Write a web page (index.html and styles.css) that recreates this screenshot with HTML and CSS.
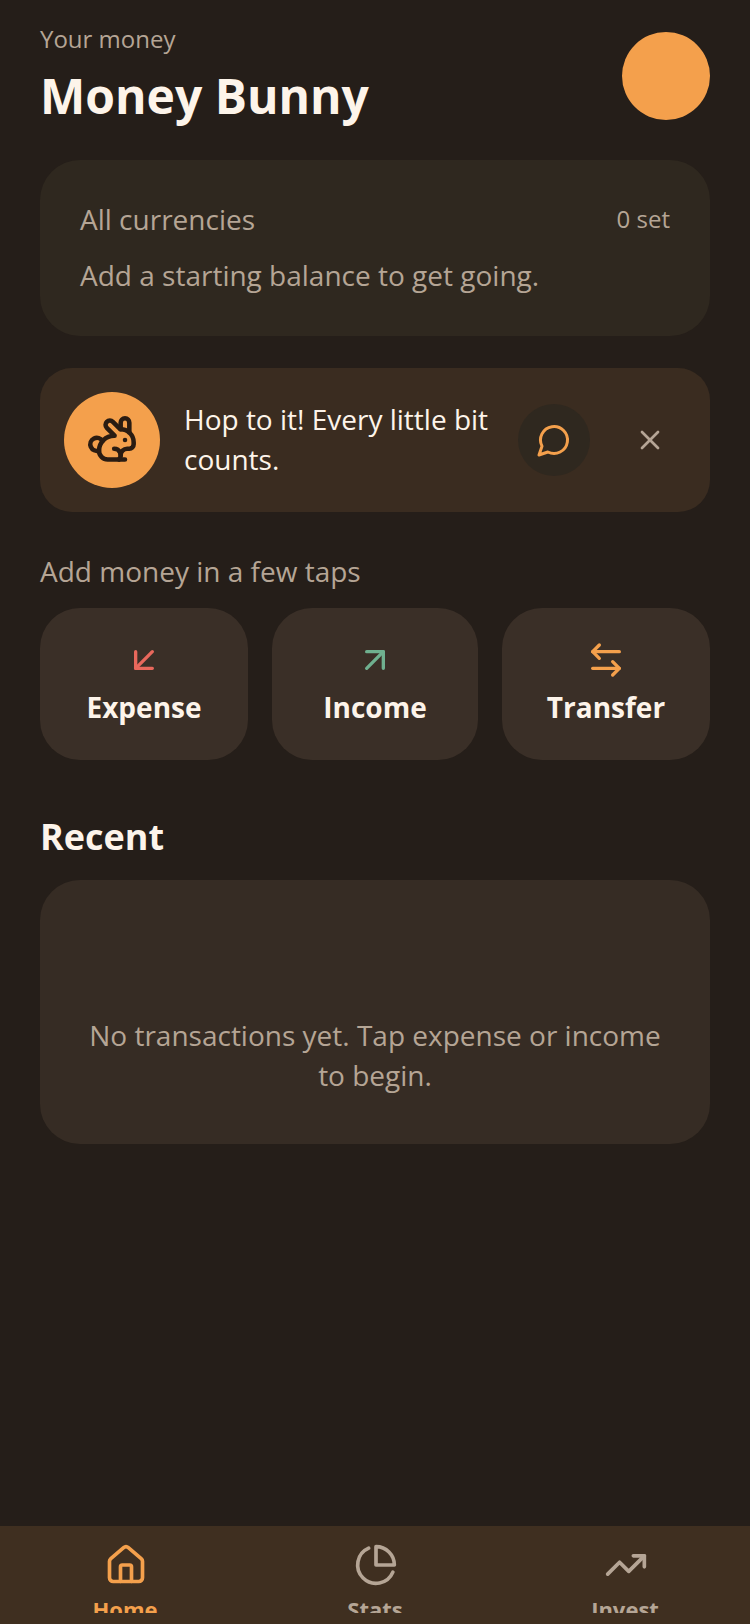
FILE: index.html
```html
<!DOCTYPE html>
<html lang="en">
  <head>
    <meta charset="UTF-8" />
    <title>Money Bunny</title>
    <link rel="stylesheet" href="styles.css">
  </head>
  <body>
    <div class="app">
      <main class="content">
        <header class="top">
          <div>
            <p class="eyebrow">Your money</p>
            <h1>Money Bunny</h1>
          </div>
          <div class="avatar"></div>
        </header>

        <section class="balance">
          <div class="balance-head">
            <span>All currencies</span>
            <span class="count">0 set</span>
          </div>
          <p>Add a starting balance to get going.</p>
        </section>

        <section class="tip">
          <div class="tip-bunny">
            <svg viewBox="0 0 24 24" class="icon"><path d="M13 16a3 3 0 0 1 2.24 5"/><path d="M18 12h.01"/><path d="M18 21h-8a4 4 0 0 1-4-4 7 7 0 0 1 7-7h.2L9.6 6.4a1 1 0 1 1 2.8-2.8L15.8 7h.2c3.3 0 6 2.7 6 6v1a2 2 0 0 1-2 2h-1a3 3 0 0 0-3 3"/><path d="M20 8.54V4a2 2 0 1 0-4 0v3"/><path d="M7.612 12.524a3 3 0 1 0-1.6 4.3"/></svg>
          </div>
          <p class="tip-text">Hop to it! Every little bit counts.</p>
          <div class="tip-chat">
            <svg viewBox="0 0 24 24" class="icon"><path d="M7.9 20A9 9 0 1 0 4 16.1L2 22Z"/></svg>
          </div>
          <div class="tip-close">
            <svg viewBox="0 0 24 24" class="icon"><path d="M18 6 6 18"/><path d="m6 6 12 12"/></svg>
          </div>
        </section>

        <p class="section-label">Add money in a few taps</p>
        <div class="actions">
          <div class="action">
            <svg viewBox="0 0 24 24" class="icon red"><path d="M17 7 7 17"/><path d="M17 17H7V7"/></svg>
            <span>Expense</span>
          </div>
          <div class="action">
            <svg viewBox="0 0 24 24" class="icon green"><path d="M7 7h10v10"/><path d="M7 17 17 7"/></svg>
            <span>Income</span>
          </div>
          <div class="action">
            <svg viewBox="0 0 24 24" class="icon orange"><path d="M8 3 4 7l4 4"/><path d="M4 7h16"/><path d="m16 21 4-4-4-4"/><path d="M20 17H4"/></svg>
            <span>Transfer</span>
          </div>
        </div>

        <h2>Recent</h2>
        <section class="empty">
          <p>No transactions yet. Tap expense or income to begin.</p>
        </section>
      </main>

      <nav class="tabs">
        <div class="tab active">
          <svg viewBox="0 0 24 24" class="icon"><path d="M15 21v-8a1 1 0 0 0-1-1h-4a1 1 0 0 0-1 1v8"/><path d="M3 10a2 2 0 0 1 .709-1.528l7-5.999a2 2 0 0 1 2.582 0l7 5.999A2 2 0 0 1 21 10v9a2 2 0 0 1-2 2H5a2 2 0 0 1-2-2z"/></svg>
          <span>Home</span>
        </div>
        <div class="tab">
          <svg viewBox="0 0 24 24" class="icon"><path d="M21.21 15.89A10 10 0 1 1 8 2.83"/><path d="M22 12A10 10 0 0 0 12 2v10z"/></svg>
          <span>Stats</span>
        </div>
        <div class="tab">
          <svg viewBox="0 0 24 24" class="icon"><path d="M22 7 13.5 15.5 8.5 10.5 2 17"/><path d="M16 7h6v6"/></svg>
          <span>Invest</span>
        </div>
      </nav>
    </div>
  </body>
</html>
```

FILE: styles.css
```css
* {
  box-sizing: border-box;
}

body {
  margin: 0;
  background: #251e19;
  font-family: "Open Sans", sans-serif;
  color: #fdf4ea;
}

p,
h1,
h2 {
  margin: 0;
}

.app {
  height: 1624px;
  display: flex;
  flex-direction: column;
  overflow: hidden;
}

.content {
  flex: 1;
  padding: 23px 40px 0;
}

.icon {
  display: block;
  fill: none;
  stroke: currentColor;
  stroke-width: 2;
  stroke-linecap: round;
  stroke-linejoin: round;
}

.top {
  display: flex;
  justify-content: space-between;
  align-items: flex-start;
  height: 137px;
}

.eyebrow {
  font-size: 24px;
  line-height: 32px;
  color: #b5a595;
}

h1 {
  font-size: 48px;
  line-height: 64px;
  font-weight: 700;
  margin-top: 9px;
}

.avatar {
  width: 88px;
  height: 88px;
  margin-top: 9px;
  border-radius: 50%;
  background: #f4a04c;
}

.balance {
  height: 176px;
  padding: 43px 40px 0;
  background: #2f281f;
  border-radius: 40px;
  font-size: 28px;
  line-height: 32px;
  color: #b5a595;
}

.balance-head {
  display: flex;
  justify-content: space-between;
  align-items: center;
  margin-bottom: 24px;
}

.count {
  font-size: 24px;
}

.tip {
  display: flex;
  align-items: center;
  height: 144px;
  margin-top: 32px;
  padding: 0 24px;
  background: #3a2c20;
  border-radius: 32px;
}

.tip-bunny {
  flex: none;
  display: flex;
  align-items: center;
  justify-content: center;
  width: 96px;
  height: 96px;
  border-radius: 50%;
  background: #f4a04c;
  color: #2a1c12;
}

.tip-bunny .icon {
  width: 52px;
  height: 52px;
  stroke-width: 2.1;
}

.tip-text {
  flex: 1;
  margin: 0 0 3px 24px;
  font-size: 28px;
  line-height: 40px;
}

.tip-chat {
  flex: none;
  display: flex;
  align-items: center;
  justify-content: center;
  width: 72px;
  height: 72px;
  border-radius: 50%;
  background: #2f281f;
  color: #f4a04c;
}

.tip-chat .icon {
  width: 36px;
  height: 36px;
}

.tip-close {
  flex: none;
  display: flex;
  align-items: center;
  justify-content: center;
  width: 72px;
  height: 72px;
  margin-left: 24px;
  color: #b5a595;
}

.tip-close .icon {
  width: 32px;
  height: 32px;
}

.section-label {
  margin-top: 39px;
  font-size: 28px;
  line-height: 40px;
  color: #b5a595;
}

.actions {
  display: grid;
  grid-template-columns: 208px 1fr 208px;
  gap: 24px;
  margin-top: 17px;
}

.action {
  display: flex;
  flex-direction: column;
  align-items: center;
  gap: 7px;
  height: 152px;
  padding-top: 32px;
  background: #3a2f27;
  border-radius: 40px;
  font-size: 28px;
  line-height: 40px;
  font-weight: 700;
}

.action .icon {
  width: 40px;
  height: 40px;
}

.red {
  color: #e8685c;
}

.green {
  color: #6fb08f;
}

.orange {
  color: #f4a04c;
}

h2 {
  margin-top: 49px;
  font-size: 36px;
  line-height: 56px;
  font-weight: 700;
}

.empty {
  height: 264px;
  margin-top: 15px;
  padding: 135px 40px 0;
  background: #362c24;
  border-radius: 40px;
  text-align: center;
  font-size: 28px;
  line-height: 40px;
  color: #b5a595;
}

.tabs {
  flex: none;
  display: grid;
  grid-template-columns: repeat(3, 1fr);
  height: 98px;
  background: #3f2f20;
}

.tab {
  display: flex;
  flex-direction: column;
  align-items: center;
  height: 87px;
  padding-top: 17px;
  overflow: hidden;
  font-size: 22px;
  line-height: 32px;
  font-weight: 700;
  color: #b5a595;
}

.tab .icon {
  flex: none;
  width: 44px;
  height: 44px;
  margin: 0 0 6px 2px;
}

.tab.active {
  color: #f4a04c;
}
```
